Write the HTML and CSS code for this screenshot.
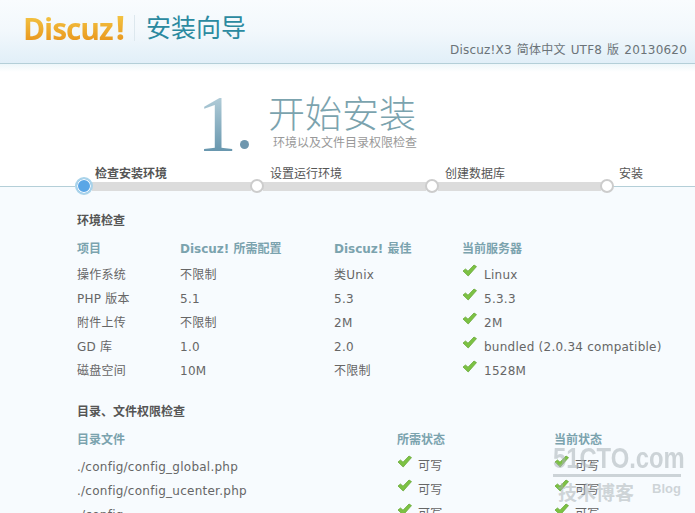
FILE: index.html
```html
<!DOCTYPE html>
<html lang="en">
<head>
    <meta charset="UTF-8">
    <title>Discuz! 安装向导</title>
    <link rel="stylesheet" href="styles.css">
</head>
<body>
    <svg class="defs" width="0" height="0">
        <symbol id="ok" viewBox="0 0 15 13">
            <path d="M1 7 L3.5 5 L6 7.2 L12 1 L14.5 2.6 L6.2 12 Z" fill="#7cc243" stroke="#6aa83a" stroke-width=".8" stroke-linejoin="round"/>
        </symbol>
    </svg>

    <!-- Header -->
    <div class="header">
        <div class="logo">Discuz<span class="logo-bang">!</span></div>
        <div class="logo-sep"></div>
        <div class="wizard-name">安装向导</div>
        <div class="version">Discuz!X3 简体中文 UTF8 版 20130620</div>
    </div>
    <div class="header-fade"></div>

    <!-- Step title -->
    <div class="step-title">
        <div class="step-num">1<span class="step-dot"></span></div>
        <div>
            <h1>开始安装</h1>
            <p>环境以及文件目录权限检查</p>
        </div>
    </div>

    <!-- Progress -->
    <div class="steps">
        <div class="lead"></div>
        <div class="step current">
            <div class="step-label">检查安装环境</div>
            <div class="track"><span class="dot"></span><span class="bar"></span></div>
        </div>
        <div class="step">
            <div class="step-label">设置运行环境</div>
            <div class="track"><span class="dot"></span><span class="bar"></span></div>
        </div>
        <div class="step">
            <div class="step-label">创建数据库</div>
            <div class="track"><span class="dot"></span><span class="bar"></span></div>
        </div>
        <div class="step last">
            <div class="step-label">安装</div>
            <div class="track"><span class="dot"></span><span class="line"></span></div>
        </div>
    </div>

    <div class="content">
        <h2>环境检查</h2>
        <table class="env">
            <tr><th>项目</th><th>Discuz! 所需配置</th><th>Discuz! 最佳</th><th>当前服务器</th></tr>
            <tr><td>操作系统</td><td>不限制</td><td>类Unix</td><td><svg class="ok"><use href="#ok"/></svg>Linux</td></tr>
            <tr><td>PHP 版本</td><td>5.1</td><td>5.3</td><td><svg class="ok"><use href="#ok"/></svg>5.3.3</td></tr>
            <tr><td>附件上传</td><td>不限制</td><td>2M</td><td><svg class="ok"><use href="#ok"/></svg>2M</td></tr>
            <tr><td>GD 库</td><td>1.0</td><td>2.0</td><td><svg class="ok"><use href="#ok"/></svg>bundled (2.0.34 compatible)</td></tr>
            <tr><td>磁盘空间</td><td>10M</td><td>不限制</td><td><svg class="ok"><use href="#ok"/></svg>1528M</td></tr>
        </table>

        <h2 class="second">目录、文件权限检查</h2>
        <table class="dirs">
            <tr><th>目录文件</th><th>所需状态</th><th>当前状态</th></tr>
            <tr><td>./config/config_global.php</td><td><svg class="ok"><use href="#ok"/></svg>可写</td><td><svg class="ok"><use href="#ok"/></svg>可写</td></tr>
            <tr><td>./config/config_ucenter.php</td><td><svg class="ok"><use href="#ok"/></svg>可写</td><td><svg class="ok"><use href="#ok"/></svg>可写</td></tr>
            <tr><td>./config</td><td><svg class="ok"><use href="#ok"/></svg>可写</td><td><svg class="ok"><use href="#ok"/></svg>可写</td></tr>
        </table>
    </div>

    <!-- Watermark on the screenshot -->
    <div class="watermark">
        <div class="wm-site"><span class="wm-text">51CTO.com</span></div>
        <div class="wm-sub"><span>技术博客</span><span class="wm-blog">Blog</span></div>
    </div>
</body>
</html>
```

FILE: styles.css
```css
html {
    overflow: hidden;
}

body {
    font-family: "DejaVu Sans", "Noto Sans CJK SC", sans-serif;
    font-size: 12px;
    line-height: 16px;
    color: #666;
    background-color: #f7fbfe;
    margin: 0;
    height: 513px;
    overflow: hidden;
    position: relative;
}

.defs {
    position: absolute;
}

.header {
    box-sizing: border-box;
    display: flex;
    align-items: flex-start;
    padding-left: 23px;
    background: linear-gradient(#f9fcfe, #f2f8fc 50%, #e1eff8);
    border-bottom: 1px solid #b4cfd8;
    height: 64px;
}

.logo {
    font-family: "Open Sans", sans-serif;
    font-size: 30px;
    font-weight: 700;
    letter-spacing: -1.1px;
    line-height: 34px;
    margin-top: 10px;
    background: linear-gradient(#f3c443 15%, #e9981f 85%);
    -webkit-background-clip: text;
    background-clip: text;
    color: transparent;
}

.logo-bang {
    font-size: 34px;
    margin-left: 3px;
}

.logo-sep {
    width: 1px;
    height: 26px;
    margin: 15px 11px 0 10px;
    background-color: #dde8ee;
}

.wizard-name {
    font-family: "Noto Sans CJK SC", sans-serif;
    font-size: 25px;
    line-height: 30px;
    margin-top: 11px;
    color: #2b8aa0;
}

.version {
    margin-left: auto;
    margin-top: 42px;
    margin-right: 8px;
    letter-spacing: .2px;
    word-spacing: 1px;
    color: #6b7378;
}

.header-fade {
    height: 8px;
    background: linear-gradient(#eef7fa, #fff);
}

.step-title {
    height: 90px;
    box-sizing: border-box;
    display: flex;
    padding: 17px 0 0 197px;
    background-color: #fff;
}

.step-num {
    font-family: "Liberation Serif", serif;
    font-size: 80px;
    line-height: 70px;
    width: 71px;
    height: 70px;
    position: relative;
    background: linear-gradient(#bcd4de, #5d8fa8);
    -webkit-background-clip: text;
    background-clip: text;
    color: transparent;
}

.step-dot {
    position: absolute;
    left: 43px;
    top: 51px;
    width: 9px;
    height: 9px;
    border-radius: 50%;
    background-color: #6f97ae;
}

h1 {
    font-family: "Noto Sans CJK SC", sans-serif;
    font-size: 37px;
    font-weight: 300;
    line-height: 40px;
    color: #7ba3ae;
    margin: 3px 0 0;
}

.step-title p {
    font-family: "Noto Sans CJK SC", sans-serif;
    font-size: 12px;
    line-height: 16px;
    color: #999;
    margin: 2px 0 0 5px;
}

.steps {
    display: flex;
    align-items: flex-end;
    height: 33px;
    background: linear-gradient(#fff 24px, #f7fbfe 24px);
}

.lead {
    width: 75px;
    height: 1px;
    margin-bottom: 8px;
    background-color: #b4cfd8;
}

.step {
    width: 175px;
}

.step.last {
    flex: 1;
}

.step-label {
    font-family: "Noto Sans CJK SC", sans-serif;
    line-height: 14px;
    margin-bottom: -3px;
    padding-left: 20px;
    color: #555;
}

.last .step-label {
    padding-left: 19px;
}

.current .step-label {
    font-weight: 700;
}

.track {
    display: flex;
    align-items: center;
    height: 18px;
}

.dot {
    flex: none;
    box-sizing: border-box;
    width: 14px;
    height: 14px;
    margin-right: -1px;
    border-radius: 50%;
    border: 2px solid #ccc;
    background-color: #fff;
    position: relative;
}

.current .dot {
    width: 18px;
    height: 18px;
    border: 2px solid #a9d3ea;
    background-color: #5aa6e6;
    box-shadow: inset 0 0 0 1px #fff;
}

.bar {
    flex: 1;
    height: 9px;
    margin-right: -1px;
    background-color: #dcdcdc;
}

.line {
    flex: 1;
    height: 1px;
    background-color: #b4cfd8;
}

.content {
    padding: 17px 0 0 77px;
}

h2 {
    font-family: "Noto Sans CJK SC", sans-serif;
    font-size: 12px;
    font-weight: 700;
    line-height: 16px;
    color: #555;
    margin: 0 0 8px;
}

h2.second {
    margin-top: 20px;
}

table {
    width: 618px;
    border-collapse: collapse;
    table-layout: fixed;
}

th {
    text-align: left;
    vertical-align: top;
    font-weight: 700;
    color: #7ba3ae;
    height: 27px;
    padding: 5px 0 0;
    box-sizing: border-box;
}

td {
    height: 24px;
    padding: 0;
    box-sizing: border-box;
    letter-spacing: .25px;
    color: #666;
}

.dirs td:first-child {
    padding-top: 2px;
}

.env th:nth-child(1) {
    width: 103px;
}

.env th:nth-child(2) {
    width: 154px;
}

.env th:nth-child(3) {
    width: 128px;
}

.dirs th:nth-child(1) {
    width: 320px;
}

.dirs th:nth-child(2) {
    width: 157px;
}

.ok {
    width: 15px;
    height: 13px;
    margin: -4px 7px 0 0;
    vertical-align: 2px;
}

.dirs .ok {
    margin-right: 6px;
}

.watermark {
    position: absolute;
    left: 553px;
    top: 442px;
    width: 128px;
    color: rgba(170, 178, 182, .55);
    font-family: "Liberation Sans", sans-serif;
    font-weight: 700;
}

.wm-site {
    font-size: 29px;
    line-height: 32px;
    white-space: nowrap;
    border-bottom: 3px solid rgba(170, 178, 182, .55);
}

.wm-text {
    display: inline-block;
    transform: scaleX(.82);
    transform-origin: left center;
}

.wm-sub {
    display: flex;
    justify-content: space-between;
    align-items: center;
    font-family: "Noto Sans CJK SC", sans-serif;
    font-size: 19px;
    line-height: 24px;
    padding-left: 5px;
}

.wm-blog {
    font-family: "Liberation Sans", sans-serif;
    font-size: 13px;
    margin-bottom: 6px;
}
```
